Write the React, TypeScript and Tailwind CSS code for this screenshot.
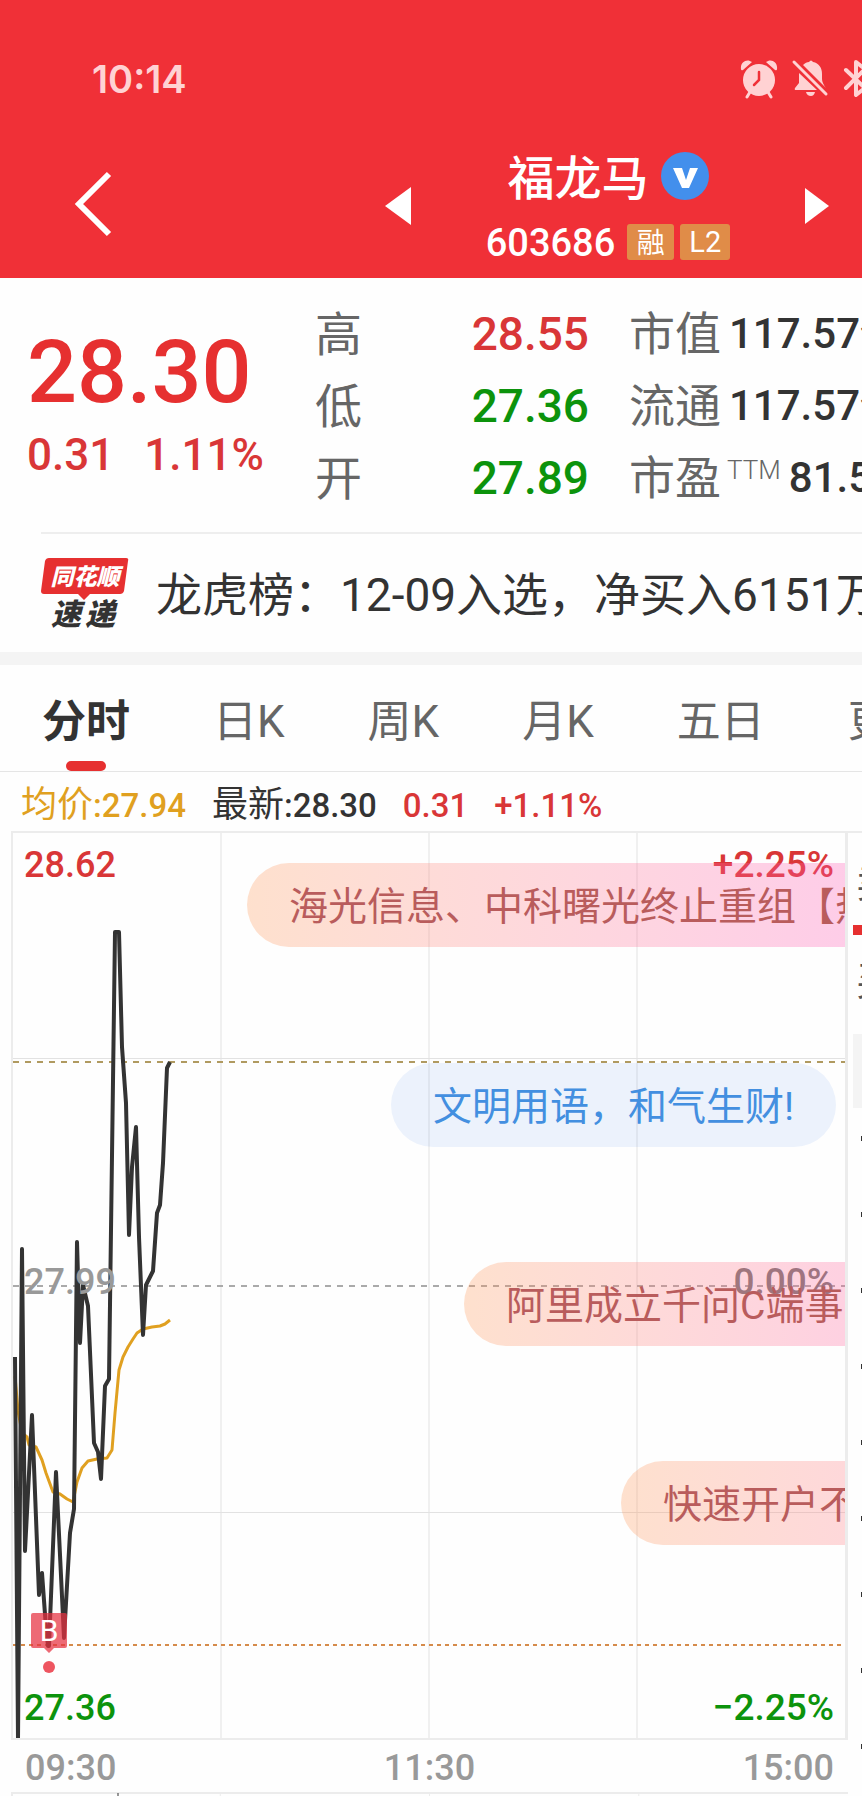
import type { ReactNode } from "react";
import clsx from "clsx";

const PRICE_LINE =
  "3,526 6,907 10,418 13,720 20,584 27,764 30,742 34,797 36,815 37,815 44,641 52,807 58,702 62,678 65,411 68,512 71,454 76,475 82,612 86,621 89,648 93,555 97,548 103,101 107,101 110,216 114,272 117,404 120,336 124,296 127,406 131,504 134,454 141,440 145,382 148,374 151,332 155,237 158,231";

const AVERAGE_LINE =
  "3,545 6,580 10,602 15,606 17,614 24,616 30,629 34,642 41,661 48,663 55,668 61,671 65,651 70,637 76,630 85,628 95,627 100,619 103,582 107,539 111,526 116,516 121,508 125,502 131,498 140,496 148,495 153,493 158,489";

const tabs = ["分时", "日K", "周K", "月K", "五日", "更多"];

const quotes = [
  { label: "高", value: "28.55", up: true },
  { label: "低", value: "27.36", up: false },
  { label: "开", value: "27.89", up: false },
];

const stats = [
  { label: "市值", value: "117.57亿" },
  { label: "流通", value: "117.57亿" },
  { label: "市盈", sup: "TTM", value: "81.56" },
];

function Num({ className, children }: { className?: string; children: ReactNode }) {
  return <span className={clsx("whitespace-nowrap font-medium", className)}>{children}</span>;
}

function StatusBar() {
  return (
    <div className="flex h-[140px] items-center pt-[18px] pl-[92px] text-[#ffd2d3]">
      <span className="w-[647px] shrink-0 font-['Inter',sans-serif] text-[38px] font-semibold leading-none">10:14</span>
      <div className="flex shrink-0 items-center gap-[12px]">
        <svg width="40" height="40" viewBox="0 0 40 40" fill="currentColor">
          <path d="M2 10C1 3 8-1 13 3L4 11Q2 12 2 10ZM38 10C39 3 32-1 27 3L36 11Q38 12 38 10Z" />
          <circle cx="20" cy="21" r="16" />
          <path d="M11 33 8 38M29 33 32 38" stroke="currentColor" strokeWidth="3" strokeLinecap="round" />
          <path d="M20 13V21L15 26" fill="none" stroke="#f03037" strokeWidth="2.5" strokeLinecap="round" />
        </svg>
        <svg width="40" height="40" viewBox="0 0 40 40" fill="currentColor">
          <path d="M12 6C14 4 16 3 18 3Q20 0 22 3C28 4 31 9 31 15V20Q31 24 35 29L12 6Z" />
          <path d="M8 14 26 31H5Q3 31 4 29L8 24Z" />
          <path d="M15 33H24Q23 37 20 37Q16 37 15 33Z" />
          <path d="M3 3 35 35" stroke="currentColor" strokeWidth="3" strokeLinecap="round" />
        </svg>
        <svg width="32" height="40" viewBox="0 0 32 40" fill="none" stroke="currentColor" strokeWidth="4" strokeLinejoin="round" strokeLinecap="round">
          <path d="M3 11 22 29 13 36V3L22 10 3 29" />
        </svg>
      </div>
    </div>
  );
}

function Header() {
  return (
    <header className="h-[278px] overflow-hidden bg-[#f03037] text-white">
      <StatusBar />
      <div className="flex h-[138px] items-center pr-[33px] pl-[74px]">
        <button aria-label="返回" className="mb-[10px]">
          <svg width="38" height="66" viewBox="0 0 38 66" fill="none" stroke="currentColor" strokeWidth="6">
            <path d="M35 3 5 33 35 63" />
          </svg>
        </button>
        <button aria-label="上一只" className="mb-[6px] ml-auto">
          <svg width="26" height="38" viewBox="0 0 26 38" fill="currentColor">
            <path d="M26 0V38L0 19Z" />
          </svg>
        </button>
        <div className="flex w-[394px] shrink-0 flex-col items-center pb-[2px]">
          <div className="flex h-[68px] items-center gap-[12px] pb-[6px]">
            <h1 className="pt-[4px] text-[47px] font-medium leading-none">福龙马</h1>
            <svg width="48" height="48" viewBox="0 0 48 48">
              <circle cx="24" cy="24" r="24" fill="#438fec" />
              <path d="M12 16H21L25 28L29 16H37L28 36H21Z" fill="#fff" />
            </svg>
          </div>
          <div className="flex h-[58px] items-center gap-[6px]">
            <Num className="mr-[6px] pt-[2px] text-[38px] leading-none">603686</Num>
            <span className="flex h-9 w-[47px] items-center justify-center rounded-[3px] bg-[#e08c48] pt-[3px] text-[28px] leading-none">融</span>
            <span className="flex h-9 w-[50px] items-center justify-center rounded-[3px] bg-[#e08c48] text-[29px] leading-none">L2</span>
          </div>
        </div>
        <button aria-label="下一只" className="mb-[6px]">
          <svg width="24" height="36" viewBox="0 0 24 36" fill="currentColor">
            <path d="M0 0V36L24 18Z" />
          </svg>
        </button>
      </div>
    </header>
  );
}

function Quote() {
  return (
    <section className="flex h-[254px] overflow-hidden pt-[20px] pl-[27px]">
      <div className="w-[288px] shrink-0 text-[#e63030]">
        <Num className="block h-[118px] text-[88px] leading-[148px]">28.30</Num>
        <div className="flex gap-[30px] text-[#d93637]">
          <Num className="text-[44px] leading-[78px]">0.31</Num>
          <Num className="text-[44px] leading-[78px]">1.11%</Num>
        </div>
      </div>
      <dl className="w-[274px] shrink-0">
        {quotes.map((q) => (
          <div key={q.label} className="flex h-[72px] items-center justify-between">
            <dt className="text-[47px] leading-none text-[#666]">{q.label}</dt>
            <dd className={q.up ? "text-[#d93637]" : "text-[#0c930c]"}>
              <Num className="block text-[46px] leading-none">{q.value}</Num>
            </dd>
          </div>
        ))}
      </dl>
      <dl className="ml-[40px] shrink-0 text-[#333]">
        {stats.map((s) => (
          <div key={s.label} className="flex h-[72px] items-center">
            <dt className="flex items-start text-[46px] leading-none text-[#666]">
              {s.label}
              {s.sup && <span className="ml-[6px] pt-[2px] text-[26px] leading-none font-light">{s.sup}</span>}
            </dt>
            <dd className="ml-[8px]">
              <Num className="block text-[42px] leading-none">{s.value}</Num>
            </dd>
          </div>
        ))}
      </dl>
    </section>
  );
}

function News() {
  return (
    <a href="#news" className="ml-[41px] flex h-[120px] items-center overflow-hidden border-t-2 border-[#eee] text-[#333]">
      <span className="relative flex h-[72px] w-[88px] shrink-0 flex-col items-center">
        <svg className="absolute inset-0" width="88" height="72" viewBox="0 0 88 72">
          <path d="M8 1H85Q88 1 87 4L83 34Q82 37 79 37H49L43 43 37 37H3Q0 37 0 34L4 4Q5 1 8 1Z" fill="#e63030" />
        </svg>
        <span className="relative h-[40px] text-[23px] font-black italic leading-[41px] text-white">同花顺</span>
        <span className="relative flex gap-[4px] pr-[4px] text-[30px] font-black italic leading-[36px]">
          <span>速</span>
          <span>递</span>
        </span>
      </span>
      <span className="ml-[27px] whitespace-nowrap pt-[4px] text-[46px] leading-none">龙虎榜：12-09入选，净买入6151万</span>
    </a>
  );
}

function Tabs() {
  return (
    <nav className="flex h-[107px] gap-[83px] overflow-hidden border-b border-[#e5e5e5] pl-[42px]">
      {tabs.map((tab, i) => (
        <button
          key={tab}
          className={clsx(
            "relative shrink-0 whitespace-nowrap pt-[8px] text-[44px] leading-none",
            i === 0 ? "font-bold text-[#333]" : "text-[#666]"
          )}
        >
          {tab}
          {i === 0 && <span className="absolute bottom-0 left-1/2 h-[10px] w-10 -translate-x-1/2 rounded-full bg-[#e63030]" />}
        </button>
      ))}
    </nav>
  );
}

function Summary() {
  return (
    <div className="flex h-[59px] items-center gap-[26px] whitespace-nowrap pt-[7px] pl-[21px] text-[36px] leading-none text-[#d93637]">
      <span className="text-[#e0a020]">
        均价<Num className="text-[33px]">:27.94</Num>
      </span>
      <span className="text-[#333]">
        最新<Num className="text-[33px]">:28.30</Num>
      </span>
      <Num className="text-[33px]">0.31</Num>
      <Num className="text-[33px]">+1.11%</Num>
    </div>
  );
}

function Bullet({ className, children }: { className: string; children: ReactNode }) {
  return (
    <div className={clsx("absolute flex h-[84px] items-center whitespace-nowrap rounded-full px-[42px] pt-[4px] text-[39px] leading-none", className)}>
      {children}
    </div>
  );
}

function Chart() {
  return (
    <div className="relative h-[909px] overflow-hidden border-2 border-r-3 border-[#ececec]">
      <svg className="absolute inset-0 h-full w-full" fill="none">
        <g stroke="#e2e2e2">
          <path d="M0 225.5H2000M0 679.5H2000" />
          <line x1="25%" x2="25%" y1="0" y2="100%" />
          <line x1="50%" x2="50%" y1="0" y2="100%" />
          <line x1="75%" x2="75%" y1="0" y2="100%" />
        </g>
        <path d="M0 229H2000" stroke="#b09a60" strokeWidth="2" strokeDasharray="6 6" />
        <path d="M0 453H2000" stroke="#aaa" strokeWidth="2" strokeDasharray="6 6" />
        <path d="M0 812H2000" stroke="#d58b4b" strokeWidth="2" strokeDasharray="4 4" />
      </svg>
      <svg className="absolute -top-0.5 -left-px" width="170" height="909" fill="none" strokeLinejoin="round">
        <polyline points={AVERAGE_LINE} stroke="#e0a020" strokeWidth="3" />
        <polyline points={PRICE_LINE} stroke="#333" strokeWidth="4" />
        <path d="M21 782H53Q55 782 55 784V815Q55 817 53 817H42L37 822 32 817H21Q19 817 19 815V784Q19 782 21 782Z" fill="#e63040" fillOpacity="0.72" />
        <circle cx="37" cy="836" r="6" fill="#ee5560" />
      </svg>
      <span className="absolute top-[780px] left-[18px] w-[36px] text-center text-[30px] leading-[36px] text-white">B</span>

      <Num className="absolute top-[10px] left-[11px] text-[36px] leading-[44px] text-[#d93637]">28.62</Num>
      <Num className="absolute top-[427px] left-[11px] text-[36px] leading-[44px] text-[#999]">27.99</Num>
      <Num className="absolute bottom-[8px] left-[11px] text-[36px] leading-[44px] text-[#0c930c]">27.36</Num>
      <Num className="absolute top-[10px] right-[11px] text-[37px] leading-[44px] text-[#d93637]">+2.25%</Num>
      <Num className="absolute top-[427px] right-[11px] text-[37px] leading-[44px] text-[#777]">0.00%</Num>
      <Num className="absolute right-[11px] bottom-[8px] text-[37px] leading-[44px] text-[#0c930c]">−2.25%</Num>

      <Bullet className="top-[30px] left-[234px] bg-linear-to-r from-[#ff9450]/28 to-[#ff4ebc]/30 text-[#b95c5c]">海光信息、中科曙光终止重组【热</Bullet>
      <Bullet className="top-[230px] left-[378px] bg-[#377deb]/9 text-[#438fe0]">文明用语，和气生财!</Bullet>
      <Bullet className="top-[429px] left-[451px] bg-linear-to-r from-[#ff9450]/28 to-[#ff5aa8]/30 text-[#b95c5c]">阿里成立千问C端事业</Bullet>
      <Bullet className="top-[628px] left-[608px] bg-linear-to-r from-[#ff9450]/28 to-[#ff6c98]/30 text-[#b95c5c]">快速开户不排队</Bullet>
    </div>
  );
}

function SideBar() {
  return (
    <aside className="h-[965px] w-[14px] shrink-0 overflow-hidden border-t-2 border-[#ececec] pl-[5px] text-[40px] text-[#555]">
      <span className="block h-[102px] w-[60px] border-b-10 border-[#e63030] pl-[3px] leading-[102px]">卖</span>
      <span className="block h-[99px] w-[60px] pl-[3px] leading-[94px]">买</span>
      <div className="h-[74px] w-[60px] bg-[#f4f4f4]" />
      <div className="flex flex-col gap-[71px] pt-[28px] pl-[8px]">
        {Array.from({ length: 9 }, (_, i) => (
          <span key={i} className="h-[5px] w-[3px] bg-[#333]" />
        ))}
      </div>
    </aside>
  );
}

export default function App() {
  return (
    <main className="overflow-hidden bg-[#fefefe] font-['Roboto','Noto_Sans_CJK_SC',sans-serif]">
      <Header />
      <Quote />
      <News />
      <div className="h-[13px] bg-[#f4f4f4]" />
      <Tabs />
      <Summary />
      <div className="flex">
        <div className="min-w-0 flex-1 pl-[11px]">
          <Chart />
          <div className="flex h-[52px] items-center justify-between px-[14px] pt-[3px] text-[#999]">
            <Num className="text-[36px] leading-none">09:30</Num>
            <Num className="text-[36px] leading-none">11:30</Num>
            <Num className="text-[36px] leading-none">15:00</Num>
          </div>
          <svg className="block h-[4px] w-full" fill="none" stroke="#ececec">
            <path d="M0 1H2000" strokeWidth="2" />
            <path d="M1 0V5" strokeWidth="2" />
            <line x1="25%" x2="25%" y1="0" y2="5" />
            <line x1="50%" x2="50%" y1="0" y2="5" />
            <line x1="75%" x2="75%" y1="0" y2="5" />
            <path d="M107 1V5" stroke="#333" />
          </svg>
        </div>
        <SideBar />
      </div>
    </main>
  );
}
